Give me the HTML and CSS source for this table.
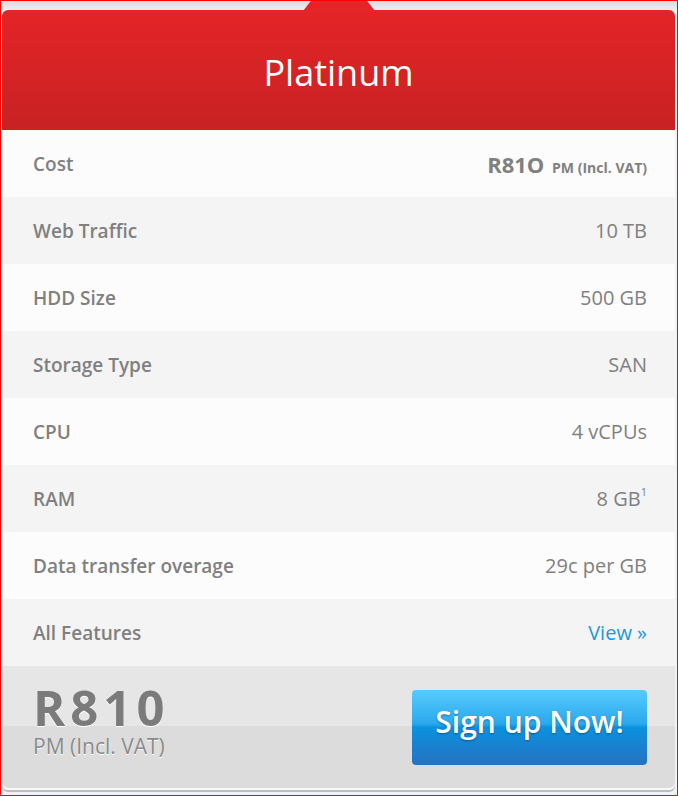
FILE: index.html
```html
<html>
    <head>
        <link rel="stylesheet" href="styles.css">
    </head>
    <body>
        <div id="plan">
            <div class="tab"></div>
            <h1 id="header">Platinum</h1>
            <div class="row">
                <span class="label">Cost</span>
                <span class="value cost">R81O <small>PM (Incl. VAT)</small></span>
            </div>
            <div class="row">
                <span class="label">Web Traffic</span>
                <span class="value">10 TB</span>
            </div>
            <div class="row">
                <span class="label">HDD Size</span>
                <span class="value">500 GB</span>
            </div>
            <div class="row">
                <span class="label">Storage Type</span>
                <span class="value">SAN</span>
            </div>
            <div class="row">
                <span class="label">CPU</span>
                <span class="value">4 vCPUs</span>
            </div>
            <div class="row">
                <span class="label">RAM</span>
                <span class="value">8 GB<sup>1</sup></span>
            </div>
            <div class="row">
                <span class="label">Data transfer overage</span>
                <span class="value">29c per GB</span>
            </div>
            <div class="row">
                <span class="label">All Features</span>
                <a class="value view" href="#">View &raquo;</a>
            </div>
            <div class="footer">
                <div class="price">
                    <div class="amount">R810</div>
                    <div class="term">PM (Incl. VAT)</div>
                </div>
                <button class="signup">Sign up Now!</button>
            </div>
        </div>
    </body>
</html>
```

FILE: styles.css
```css
html, body {
    margin: 0;
    height: 100%;
}
body {
    box-sizing: border-box;
    border: 1px solid #ff0000;
    padding: 9px 2px 5px 1px;
    background: linear-gradient(#d9d9d9, #f2f2f2 12px, #f2f2f2);
    font-family: "Open Sans", sans-serif;
}
#plan {
    position: relative;
    display: flex;
    flex-direction: column;
    border-radius: 6px;
    background: #fcfcfc;
    box-shadow: 0 2px 0 #bdbdbd;
}
.tab {
    position: absolute;
    top: -10px;
    left: 301px;
    width: 72px;
    height: 11px;
    background: #e42427;
    clip-path: polygon(12% 0, 88% 0, 100% 100%, 0 100%);
}
#header {
    margin: 0;
    height: 120px;
    display: flex;
    align-items: center;
    justify-content: center;
    border-radius: 6px 6px 0 0;
    background: linear-gradient(#e42427, #c82224);
    color: #fff;
    font-weight: 400;
    font-size: 36px;
    padding-top: 4px;
    box-sizing: border-box;
}
.row {
    height: 67px;
    display: flex;
    align-items: center;
    justify-content: space-between;
    padding: 0 28px 0 31px;
    color: #808080;
    font-size: 20px;
}
.row:nth-child(even) {
    background: #f4f4f4;
}
.label {
    font-weight: 600;
    font-size: 19px;
}
.cost {
    font-weight: 700;
    font-size: 22px;
}
.cost small {
    font-size: 14px;
    margin-left: 2px;
}
sup {
    font-size: 11px;
    position: relative;
    top: -2px;
}
.view {
    color: #1d98d8;
    text-decoration: none;
}
.footer {
    height: 124px;
    display: flex;
    justify-content: space-between;
    align-items: flex-start;
    padding: 14px 28px 0 31px;
    box-sizing: border-box;
    border-radius: 0 0 6px 6px;
    background: linear-gradient(#e6e6e6 0, #e6e6e6 60px, #dcdcdc 60px);
    box-shadow: inset 0 -2px 0 #f8f8f8;
}
.amount {
    font-size: 49px;
    font-weight: 700;
    color: #7b7b7b;
    letter-spacing: 5px;
    line-height: 54px;
    text-shadow: 0 1px 0 #fff;
}
.term {
    font-size: 21px;
    color: #8a8a8a;
    line-height: 24px;
    text-shadow: 0 1px 0 #fff;
}
.signup {
    margin-top: 10px;
    width: 235px;
    height: 75px;
    border: 0;
    border-radius: 4px;
    background: linear-gradient(#57cbfc, #2aa9ee 45%, #0b91df 50%, #2672c1);
    color: #fff;
    font-family: "Open Sans", sans-serif;
    font-weight: 600;
    font-size: 30px;
    text-shadow: 0 1px 2px rgba(0, 0, 0, 0.35);
    padding-bottom: 14px;
}
```
